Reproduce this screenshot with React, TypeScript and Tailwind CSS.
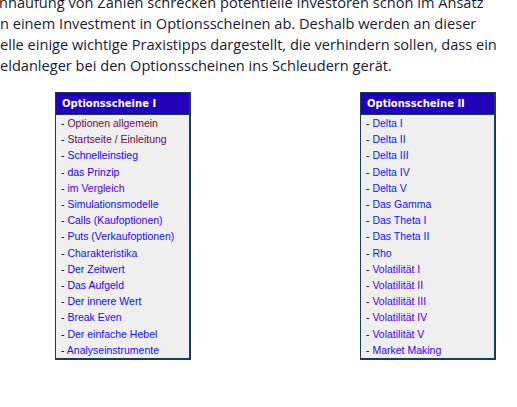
const left: [string, string][] = [
  ["Optionen allgemein", "text-[#6e0a45]"],
  ["Startseite / Einleitung", "text-[#6e0a45]"],
  ["Schnelleinstieg", "text-[#0a0aff]"],
  ["das Prinzip", "text-[#2a00ee]"],
  ["im Vergleich", "text-[#5500dd]"],
  ["Simulationsmodelle", "text-[#1510f0]"],
  ["Calls (Kaufoptionen)", "text-[#3000f0]"],
  ["Puts (Verkaufoptionen)", "text-[#1a10f5]"],
  ["Charakteristika", "text-[#1a10f5]"],
  ["Der Zeitwert", "text-[#0a0aff]"],
  ["Das Aufgeld", "text-[#2a00ee]"],
  ["Der innere Wert", "text-[#0a0aff]"],
  ["Break Even", "text-[#1a10f5]"],
  ["Der einfache Hebel", "text-[#1a10f5]"],
  ["Analyseinstrumente", "text-[#1a10f5]"],
];

const right: [string, string][] = [
  ["Delta I", "text-[#0a1aff]"],
  ["Delta II", "text-[#0a1aff]"],
  ["Delta III", "text-[#0a1aff]"],
  ["Delta IV", "text-[#0a1aff]"],
  ["Delta V", "text-[#0a1aff]"],
  ["Das Gamma", "text-[#0a1aff]"],
  ["Das Theta I", "text-[#0a1aff]"],
  ["Das Theta II", "text-[#0a1aff]"],
  ["Rho", "text-[#0a1aff]"],
  ["Volatilität I", "text-[#4a00e8]"],
  ["Volatilität II", "text-[#4a00e8]"],
  ["Volatilität III", "text-[#4a00e8]"],
  ["Volatilität IV", "text-[#4a00e8]"],
  ["Volatilität V", "text-[#4a00e8]"],
  ["Market Making", "text-[#3a00f0]"],
];

function MenuBox({ title, items }: { title: string; items: [string, string][] }) {
  return (
    <div className="w-[136px] border border-r-2 border-b-2 border-[#1c3a5e] bg-[#efefef]">
      <div className="h-[22px] border-b border-[#1c3a5e] bg-[#2200bb] pl-[6px] font-['DejaVu_Sans',sans-serif] text-[10px] font-bold leading-[21px] text-white">
        {title}
      </div>
      <ul className="font-['Liberation_Sans',Arial,sans-serif] text-[10.5px] leading-[16.2px]">
        {items.map(([label, color]) => (
          <li key={label} className="whitespace-nowrap pl-[5px] text-black">
            - <a className={color}>{label}</a>
          </li>
        ))}
      </ul>
    </div>
  );
}

export default function App() {
  return (
    <div className="h-[407px] w-[517px] overflow-hidden bg-white">
      <div className="-mt-[8px] font-['Open_Sans',sans-serif] text-[14.6px] leading-[21px] text-[#1a1a33]">
        <p className="-ml-[1px] whitespace-nowrap">nhäufung von Zahlen schrecken potentielle Investoren schon im Ansatz</p>
        <p className="whitespace-nowrap">n einem Investment in Optionsscheinen ab. Deshalb werden an dieser</p>
        <p className="whitespace-nowrap">elle einige wichtige Praxistipps dargestellt, die verhindern sollen, dass ein</p>
        <p className="whitespace-nowrap">eldanleger bei den Optionsscheinen ins Schleudern gerät.</p>
      </div>
      <div className="mt-[16px] flex gap-[169px] pl-[55px]">
        <MenuBox title="Optionsscheine I" items={left} />
        <MenuBox title="Optionsscheine II" items={right} />
      </div>
    </div>
  );
}
